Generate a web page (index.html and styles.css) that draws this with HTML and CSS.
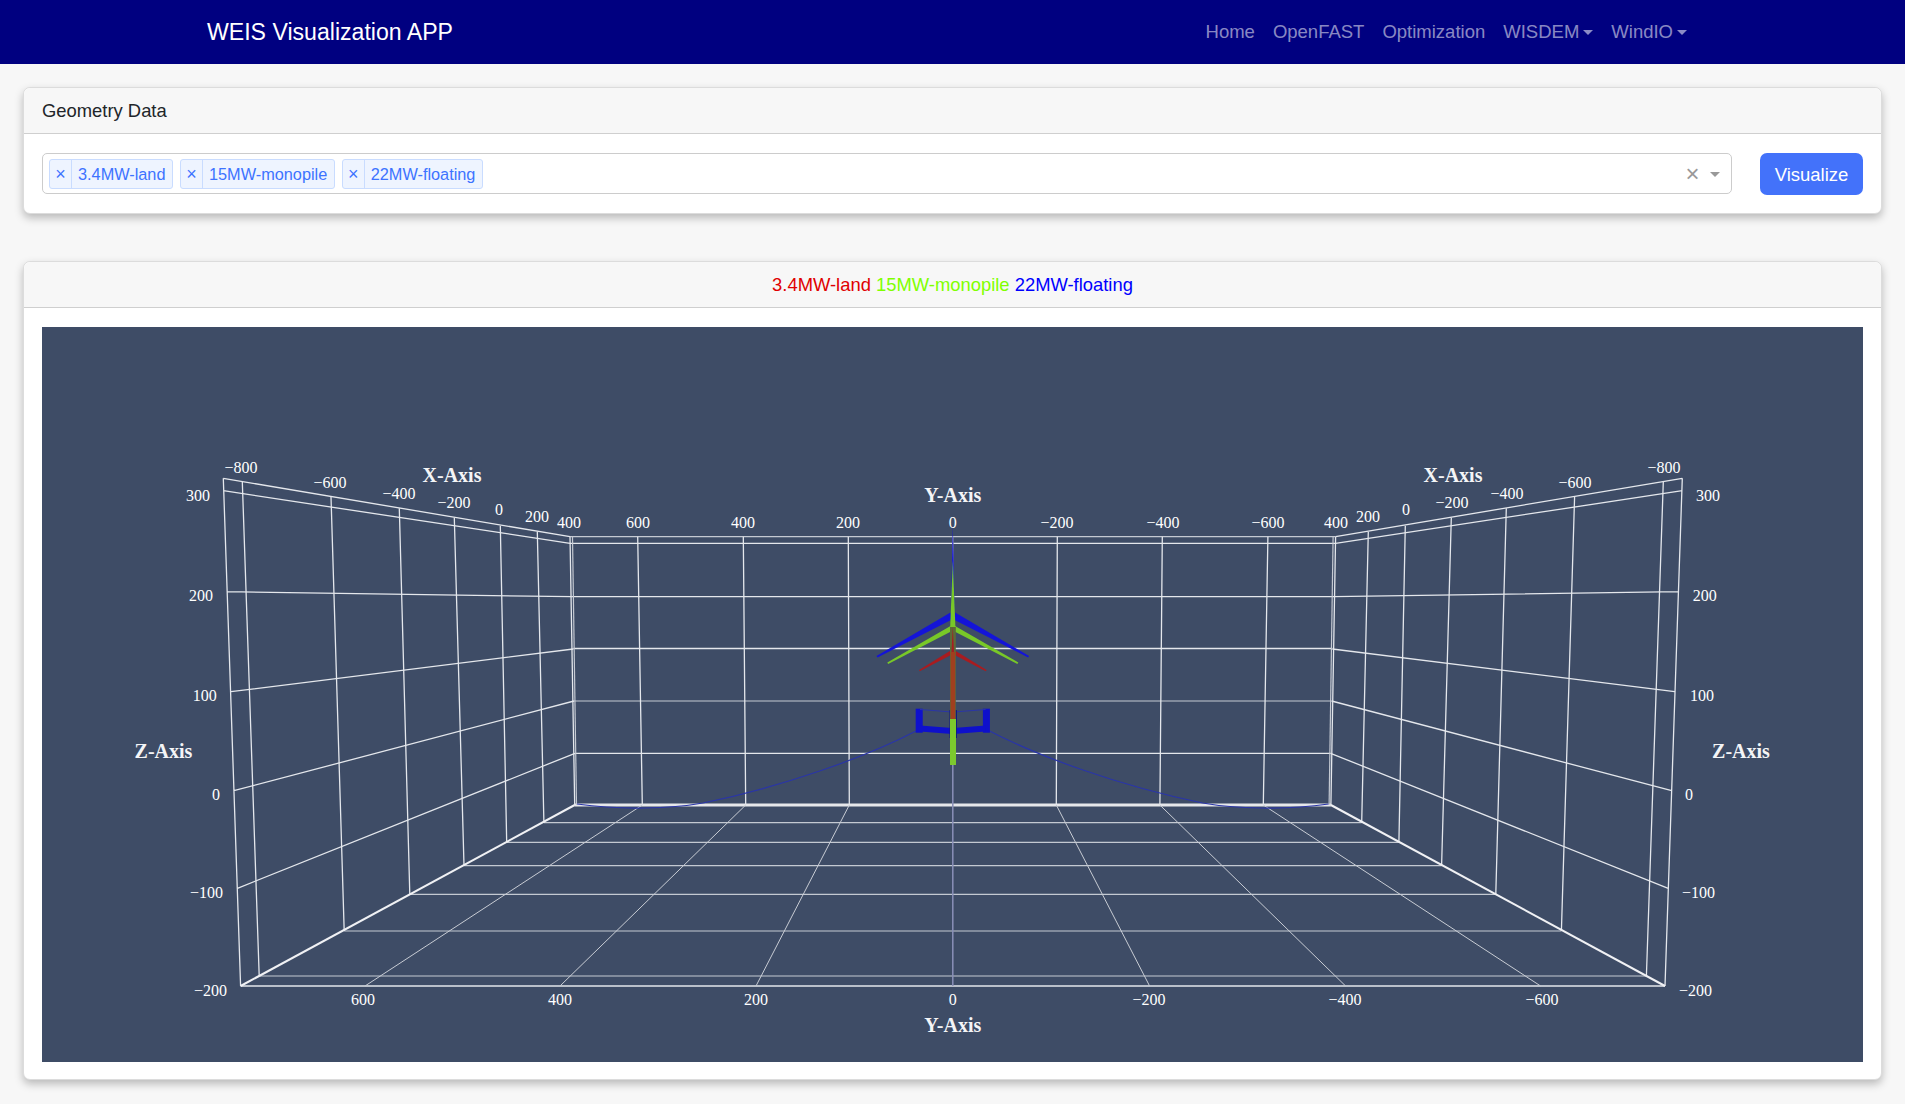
FILE: index.html
```html
<!DOCTYPE html>
<html lang="en">
<head>
    <meta charset="UTF-8">
    <meta name="viewport" content="width=device-width, initial-scale=1.0">
    <title>WEIS Visualization APP</title>
    <link rel="stylesheet" href="styles.css">
</head>
<body>
    <nav class="navbar">
        <a class="brand" href="#">WEIS Visualization APP</a>
        <ul class="nav-links">
            <li><a href="#">Home</a></li>
            <li><a href="#">OpenFAST</a></li>
            <li><a href="#">Optimization</a></li>
            <li><a class="dropdown" href="#">WISDEM</a></li>
            <li><a class="dropdown" href="#">WindIO</a></li>
        </ul>
    </nav>

    <main class="content">
        <section class="card">
            <div class="card-header">Geometry Data</div>
            <div class="card-body picker-row">
                <div class="select-box">
                    <span class="tag"><span class="tag-remove">×</span><span class="tag-label">3.4MW-land</span></span>
                    <span class="tag"><span class="tag-remove">×</span><span class="tag-label">15MW-monopile</span></span>
                    <span class="tag"><span class="tag-remove">×</span><span class="tag-label">22MW-floating</span></span>
                    <span class="select-clear">×</span>
                    <span class="select-arrow"></span>
                </div>
                <button class="btn-visualize">Visualize</button>
            </div>
        </section>

        <section class="card card-plot">
            <div class="card-header legend">
                <span class="red">3.4MW-land</span>
                <span class="green">15MW-monopile</span>
                <span class="blue">22MW-floating</span>
            </div>
            <div class="card-body">
                <!-- viewBox uses page coordinates, easier to compare with the plot -->
                <svg class="plot" viewBox="42 327 1821 735">
                    <defs>
                        <g id="half">
                            <path class="grid" d="M223.3 478.3L240.6 986M223.3 478.3L570 536.7M223.3 490.7L570 543.3M226.7 591.7L571.7 596.7M230.9 691.7L573.3 649M233.9 790.7L574 701M237.4 888.3L575 753.3"/>
                            <path class="grid" d="M242.3 481.7L259.2 976M331 496.7L344.2 931M399.3 508.3L409.8 894.3M454.3 517.7L464 865.7M500.3 525.7L506.7 842.3M537.3 531.7L543.9 822.7M570 536.7L574.7 805"/>
                            <path class="grid-soft" d="M572.5 537L576.5 805"/>
                            <path class="grid" d="M637.7 536.7L642.3 805M743.3 536.7L745.7 805M848.3 536.7L849.3 805"/>
                            <path class="grid-thin" d="M365 986L642.3 805M560 986L745.7 805M756 986L849.3 805"/>
                            <path class="edge" d="M240.6 986L574.7 805"/>
                            <path class="mooring" d="M916 731C870 755 790 785 703 803C670 809 620 810 577 804"/>
                            <path class="blade-blue" d="M950.5 612.5L876.5 656L877.5 657.5L952 619.5Z"/>
                            <path class="blade-green" d="M950.5 626L887.3 662.5L888.2 664L952 631Z"/>
                            <path class="blade-red" d="M951.5 650L919 670L919.8 671.2L952 654.5Z"/>
                            <rect class="float" x="915.7" y="708.7" width="7" height="24"/>
                            <path class="float" d="M920 725.5L952 728V734L920 731.5Z"/>
                            <path class="float-thin" d="M920 709.5L952 712"/>
                        </g>
                    </defs>

                    <path class="grid" d="M570 543.3H1335.6M571.7 596.7H1334M573.3 648.5H1332.3M575 753.3H1330.6"/>
                    <path class="grid-soft" d="M570 536.7H1335.6M574 701H1331.6M543.9 822.7H1361.7M506.7 842.3H1398.9M464 865.7H1441.6M409.8 894.3H1495.8M344.2 931H1561.4M259.2 976H1646.4"/>
                    <path class="grid" d="M240.6 986H1665"/>
                    <path class="floor-back" d="M574.7 805H1330.9"/>
                    <path class="center-line" d="M952.8 536.7V986"/>
                    <use href="#half"/>
                    <use href="#half" transform="translate(1905.6 0) scale(-1 1)"/>

                    <!-- turbines, back to front -->
                    <path class="blade-blue" d="M952.8 525L951 613H954.6Z"/>
                    <rect class="spar" x="949.5" y="710" width="7.5" height="28"/>
                    <path class="blade-green" d="M952.8 560L950.2 627H955.4Z"/>
                    <rect class="tower-dark" x="950" y="627" width="5.8" height="92"/>
                    <path class="blade-red" d="M952.8 627L951.5 652H954Z"/>
                    <rect class="tower-red" x="950.6" y="652" width="4.6" height="67"/>
                    <rect class="tower-green" x="950" y="719" width="6" height="46"/>

                    <g class="ticks">
                        <text x="241" y="467">−800</text>
                        <text x="330" y="482">−600</text>
                        <text x="399" y="493">−400</text>
                        <text x="454" y="502">−200</text>
                        <text x="499" y="509">0</text>
                        <text x="537" y="516">200</text>
                        <text x="569" y="522">400</text>
                        <text x="638" y="522">600</text>
                        <text x="743" y="522">400</text>
                        <text x="848" y="522">200</text>
                        <text x="952.8" y="522">0</text>
                        <text x="1057" y="522">−200</text>
                        <text x="1163" y="522">−400</text>
                        <text x="1268" y="522">−600</text>
                        <text x="1336" y="522">400</text>
                        <text x="1368" y="516">200</text>
                        <text x="1406" y="509">0</text>
                        <text x="1452" y="502">−200</text>
                        <text x="1507" y="493">−400</text>
                        <text x="1575" y="482">−600</text>
                        <text x="1664" y="467">−800</text>
                        <text x="363" y="999">600</text>
                        <text x="560" y="999">400</text>
                        <text x="756" y="999">200</text>
                        <text x="952.8" y="999">0</text>
                        <text x="1149" y="999">−200</text>
                        <text x="1345" y="999">−400</text>
                        <text x="1542" y="999">−600</text>
                    </g>
                    <g class="ticks ticks-end">
                        <text x="210" y="495">300</text>
                        <text x="213" y="595">200</text>
                        <text x="216.7" y="695">100</text>
                        <text x="220" y="794">0</text>
                        <text x="223" y="892">−100</text>
                        <text x="227" y="990">−200</text>
                    </g>
                    <g class="ticks ticks-start">
                        <text x="1696" y="495">300</text>
                        <text x="1692.7" y="595">200</text>
                        <text x="1690" y="695">100</text>
                        <text x="1685" y="794">0</text>
                        <text x="1682" y="892">−100</text>
                        <text x="1679" y="990">−200</text>
                    </g>
                    <g class="axis-titles">
                        <text x="452" y="475">X-Axis</text>
                        <text x="1453" y="475">X-Axis</text>
                        <text x="952.8" y="495">Y-Axis</text>
                        <text x="952.8" y="1025">Y-Axis</text>
                        <text x="163.5" y="751">Z-Axis</text>
                        <text x="1741" y="751">Z-Axis</text>
                    </g>
                </svg>
            </div>
        </section>
    </main>
</body>
</html>
```

FILE: styles.css
```css
* {
    box-sizing: border-box;
}
body {
    font-family: "Liberation Sans", Arial, sans-serif;
    font-size: 18.4px;
    margin: 0;
    padding: 0;
    background-color: #f7f7f7;
    color: #212529;
}

/* top bar */
.navbar {
    display: flex;
    align-items: center;
    height: 64px;
    padding: 0 209px 0 207px;
    background: #000080;
}
.brand {
    font-size: 23.1px;
    color: white;
    text-decoration: none;
}
.nav-links {
    display: flex;
    list-style: none;
    margin: 0 0 0 auto;
    padding: 0;
    font-size: 18.5px;
}
.nav-links a {
    display: block;
    padding: 8px 9px;
    color: rgba(255, 255, 255, 0.55);
    text-decoration: none;
}
.dropdown::after {
    content: "";
    display: inline-block;
    margin-left: 4px;
    vertical-align: 3px;
    border-top: 5px solid;
    border-left: 5px solid transparent;
    border-right: 5px solid transparent;
}

/* cards */
.content {
    padding: 23px 23.5px 23px 23px;
}
.card {
    background: white;
    border: 1px solid #dcdcdc;
    border-radius: 7px;
    box-shadow: 0 4px 8px rgba(0, 0, 0, 0.25);
}
.card-plot {
    margin-top: 47px;
}
.card-header {
    height: 46px;
    padding: 0 17.5px 0 18px;
    line-height: 45px;
    background: #f7f7f7;
    border-bottom: 1px solid #cfcfcf;
    border-radius: 7px 7px 0 0;
}
.card-body {
    padding: 19px 17.5px 18px 18px;
}
.card-plot .card-body {
    padding-bottom: 17px;
}

/* geometry picker */
.picker-row {
    display: flex;
    align-items: flex-start;
    gap: 28px;
}
.select-box {
    flex: 1;
    display: flex;
    align-items: center;
    gap: 6.5px;
    height: 41px;
    padding: 1px 11px 0 6px;
    border: 1px solid #ccc;
    border-radius: 5px;
    background: white;
}
.tag {
    display: flex;
    height: 30px;
    line-height: 28px;
    font-size: 16.3px;
    color: #3d73ff;
    background: #eef4ff;
    border: 1px solid #c9dcff;
    border-radius: 3px;
}
.tag-remove {
    width: 22px;
    text-align: center;
    font-size: 18px;
    border-right: 1px solid #c9dcff;
}
.tag-label {
    padding: 0 7px 0 6px;
}
.select-clear {
    margin-left: auto;
    margin-right: 4px;
    font-size: 24px;
    line-height: 1;
    color: #999;
}
.select-arrow {
    border-top: 5px solid #999;
    border-left: 5px solid transparent;
    border-right: 5px solid transparent;
}
.btn-visualize {
    width: 103px;
    height: 42px;
    padding: 1px 0 0;
    border: none;
    border-radius: 7px;
    background: #4372fa;
    color: white;
    font-family: inherit;
    font-size: 18.5px;
}

/* plot header */
.legend {
    text-align: center;
}
.red {
    color: #e00000;
}
.green {
    color: #7fff00;
}
.blue {
    color: #0000ff;
}

/* 3d plot */
.plot {
    display: block;
    width: 100%;
    height: 735px;
    background: #3e4c66;
    font-family: "Liberation Serif", "Times New Roman", serif;
}
.plot path, .plot rect {
    fill: none;
}
.grid {
    stroke: #e4e7ec;
    stroke-width: 1.3;
}
.grid-thin {
    stroke: #c8ccd4;
    stroke-width: 1;
}
.grid-soft {
    stroke: #c4c9d2;
    stroke-width: 1.2;
}
.edge {
    stroke: #f0f1f4;
    stroke-width: 2;
}
.floor-back {
    stroke: #e6e7ea;
    stroke-width: 3;
}
.center-line {
    stroke: #8a90b8;
    stroke-width: 1.5;
}
.mooring {
    stroke: #2a35a8;
    stroke-width: 1.2;
}
.plot .blade-blue {
    fill: #1414d8;
}
.plot .blade-green {
    fill: #78c828;
}
.plot .blade-red {
    fill: #a81c20;
}
.plot .float, .plot .spar {
    fill: #0e10cc;
}
.plot .spar {
    fill: #101a80;
}
.float-thin {
    stroke: #2a35a8;
    stroke-width: 1;
}
.plot .tower-dark {
    fill: #5c6a38;
}
.plot .tower-red {
    fill: #a0401f;
}
.plot .tower-green {
    fill: #7cc92e;
}
.ticks text {
    font-size: 16px;
    fill: white;
    text-anchor: middle;
    dominant-baseline: central;
}
.ticks-end text {
    text-anchor: end;
}
.ticks-start text {
    text-anchor: start;
}
.axis-titles text {
    font-size: 20px;
    font-weight: bold;
    fill: #f4f5f7;
    text-anchor: middle;
    dominant-baseline: central;
}
```
